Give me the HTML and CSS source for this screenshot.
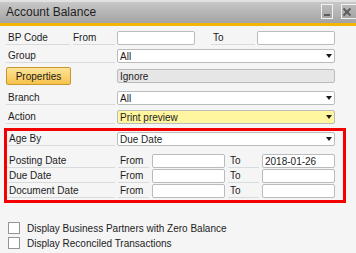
FILE: index.html
```html
<!DOCTYPE html>
<html lang="en">

<head>
    <title>Account Balance</title>
    <meta charset="UTF-8" />
    <meta name="viewport" content="width=device-width,initial-scale=1" />
    <link rel="stylesheet" href="styles.css">
</head>

<body>
    <div class="window">
        <div class="titlebar">
            <span class="title">Account Balance</span>
            <div class="controls">
                <span class="ctl ctl-min">
                    <svg width="10" height="13" viewBox="0 0 10 13"><rect x="2" y="9" width="6" height="2" fill="#5c5c5c" /></svg>
                </span>
                <span class="ctl ctl-close">
                    <svg width="13" height="13" viewBox="0 0 13 13"><path d="M1.5 3.5L8.5 10.5M8.5 3.5L1.5 10.5" stroke="#5c5c5c" stroke-width="2" /></svg>
                </span>
            </div>
        </div>

        <div class="content">
            <div class="row row-bp">
                <span class="lbl lbl-bp">BP Code</span>
                <span class="lbl lbl-from">From</span>
                <span class="field field-half"></span>
                <span class="lbl lbl-to">To</span>
                <span class="field field-half"></span>
            </div>
            <div class="row row-group">
                <span class="lbl lbl-main">Group</span>
                <span class="field field-full select">All<i class="arrow"></i></span>
            </div>
            <div class="row row-props">
                <button class="btn">Properties</button>
                <span class="field field-full readonly">Ignore</span>
            </div>
            <div class="row row-branch">
                <span class="lbl lbl-main">Branch</span>
                <span class="field field-full select">All<i class="arrow"></i></span>
            </div>
            <div class="row row-action">
                <span class="lbl lbl-main">Action</span>
                <span class="field field-full select highlight">Print preview<i class="arrow"></i></span>
            </div>

            <div class="marked">
                <div class="row row-age">
                    <span class="lbl lbl-inner">Age By</span>
                    <span class="field field-full select">Due Date<i class="arrow"></i></span>
                </div>
                <div class="row row-date row-posting">
                    <span class="lbl lbl-inner">Posting Date</span>
                    <span class="lbl lbl-small">From</span>
                    <span class="field field-date"></span>
                    <span class="lbl lbl-small">To</span>
                    <span class="field field-date">2018-01-26</span>
                </div>
                <div class="row row-date">
                    <span class="lbl lbl-inner">Due Date</span>
                    <span class="lbl lbl-small">From</span>
                    <span class="field field-date"></span>
                    <span class="lbl lbl-small">To</span>
                    <span class="field field-date"></span>
                </div>
                <div class="row row-date">
                    <span class="lbl lbl-inner">Document Date</span>
                    <span class="lbl lbl-small">From</span>
                    <span class="field field-date"></span>
                    <span class="lbl lbl-small">To</span>
                    <span class="field field-date"></span>
                </div>
            </div>

            <label class="check check-first"><span class="box"></span>Display Business Partners with Zero Balance</label>
            <label class="check"><span class="box"></span>Display Reconciled Transactions</label>
        </div>
    </div>
</body>

</html>
```

FILE: styles.css
```css
/* Variables */
:root {
    --text-color: #1c1c1c;
    --field-border: #b8bcbc;
    --label-line: #d8dbdb;
    --content-bg: #f5f5f5;
    --accent: #f2b705;
}

* {
    box-sizing: border-box;
}

body {
    margin: 0;
    background: var(--content-bg);
    color: var(--text-color);
    font: 10px "Liberation Sans", Arial, sans-serif;
    overflow: hidden;
}

.window {
    width: 356px;
    height: 253px;
}

/* Title bar */
.titlebar {
    display: flex;
    align-items: flex-start;
    height: 26px;
    padding-left: 6px;
    border-top: 2px solid #e2e2e2;
    border-bottom: 3px solid var(--accent);
    background: linear-gradient(#c8c8c8, #a3a3a3);
}

.title {
    font-size: 12px;
    line-height: 21px;
    color: #1e1e1e;
}

.controls {
    display: flex;
    gap: 8px;
    margin-left: auto;
    margin-top: 2px;
}

.ctl {
    display: block;
    width: 12px;
    height: 15px;
    border: 1px solid #f1f1f1;
    background: linear-gradient(#bababa, #a5a5a5);
}

.ctl svg {
    display: block;
}

.ctl-close {
    width: 15px;
    border-right: 0;
}

/* Form rows */
.content {
    padding-top: 5px;
}

.row {
    display: flex;
    align-items: center;
    gap: 2px;
    height: 14px;
    margin-left: 6px;
}

.lbl {
    height: 14px;
    padding-left: 2px;
    border-bottom: 1px solid var(--label-line);
    line-height: 14px;
    white-space: nowrap;
}

.field {
    display: flex;
    align-items: center;
    height: 14px;
    padding-left: 2px;
    border: 1px solid var(--field-border);
    border-radius: 2px;
    background: #fff;
    white-space: nowrap;
}

.field-half {
    width: 78px;
}

.field-full {
    width: 218px;
}

.field-date {
    width: 73px;
}

.select {
    justify-content: space-between;
    padding-right: 2px;
}

.arrow {
    width: 0;
    height: 0;
    border-top: 4px solid #1a1a1a;
    border-left: 3.5px solid transparent;
    border-right: 3.5px solid transparent;
}

.readonly {
    background: #e6e6e6;
}

.highlight {
    background: #fff69f;
}

.lbl-bp {
    width: 64px;
}

.lbl-from {
    width: 42px;
    margin-left: 1px;
    padding-left: 0;
}

.lbl-to {
    width: 44px;
    margin-left: 14px;
}

.lbl-main {
    width: 109px;
}

.row-group {
    margin-top: 4px;
}

.row-props {
    height: 18px;
    margin-top: 4px;
    gap: 46px;
}

.btn {
    width: 65px;
    height: 18px;
    padding: 0;
    border: 1px solid #c9972c;
    border-radius: 2px;
    background: linear-gradient(#fde49a, #f6c24c);
    color: var(--text-color);
    font: inherit;
}

.row-branch {
    margin-top: 6px;
}

.row-action {
    margin-top: 5px;
}

/* Marked block */
.marked {
    width: 342px;
    margin: 4px 0 0 4px;
    padding: 1px 0 2px;
    border: 3px solid #f40000;
}

.marked .row {
    margin-left: 0;
}

.lbl-inner {
    width: 108px;
}

.row-date {
    gap: 3px;
    margin-top: 1px;
}

.row-date .lbl-inner {
    margin-right: 0;
}

.row-posting {
    margin-top: 8px;
}

.lbl-small {
    width: 31px;
}

/* Checkboxes */
.check {
    display: flex;
    align-items: center;
    gap: 7px;
    height: 12px;
    margin: 3px 0 0 8px;
}

.check-first {
    margin-top: 19px;
}

.box {
    width: 12px;
    height: 12px;
    border: 1px solid #959595;
    background: #fff;
}
```
